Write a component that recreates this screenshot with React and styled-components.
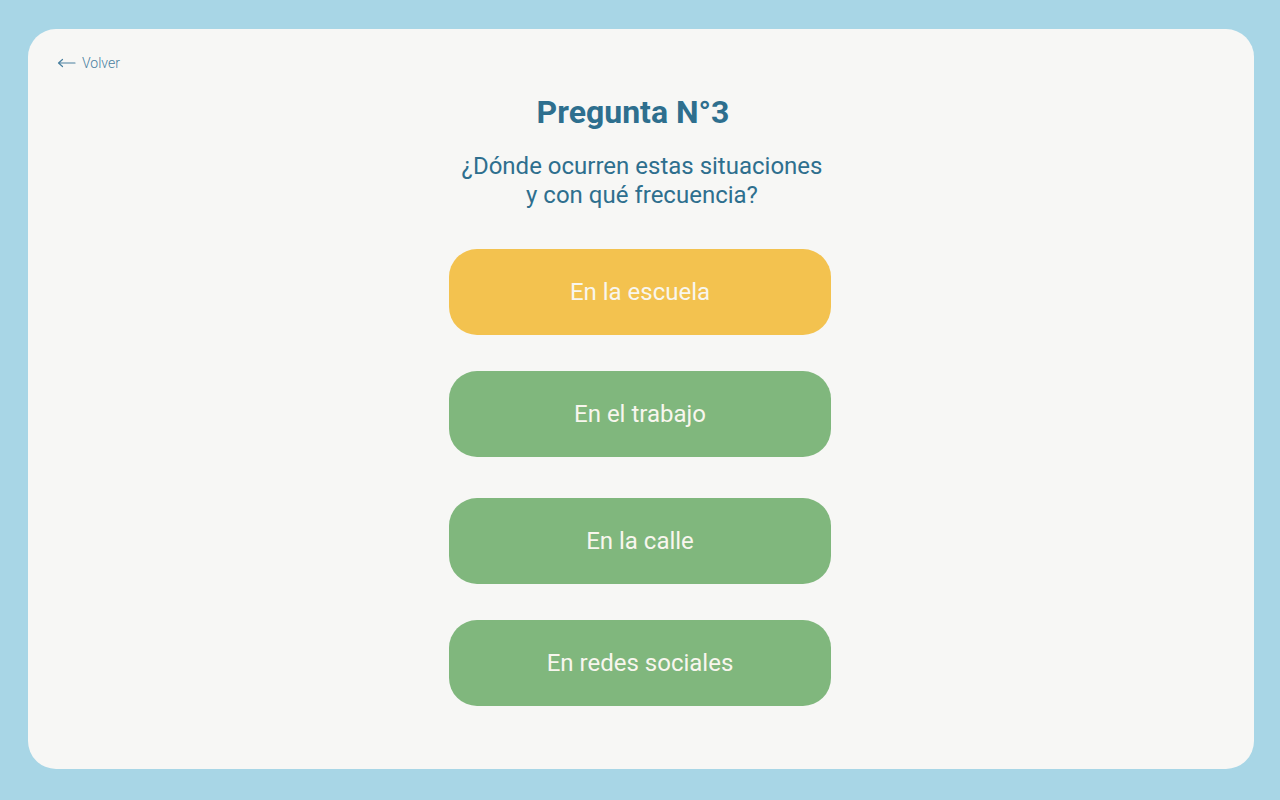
import React from "react";
import styled, { createGlobalStyle } from "styled-components";

const Global = createGlobalStyle`
  html, body { margin: 0; padding: 0; }
  body {
    background: #a8d6e6;
    font-family: Roboto, "Noto Sans", sans-serif;
  }
`;

const Page = styled.div`
  width: 1280px;
  height: 800px;
  box-sizing: border-box;
  padding: 29px 26px 31px 28px;
  display: flex;
`;

const Card = styled.main`
  flex: 1;
  background: #f7f7f5;
  border-radius: 28px;
  display: flex;
  flex-direction: column;
  align-items: center;
  position: relative;
`;

const Back = styled.a`
  align-self: flex-start;
  margin: 25px 0 0 29px;
  display: flex;
  align-items: center;
  gap: 6px;
  color: #4a80a0;
  font-size: 14px;
  font-weight: 300;
  line-height: 18px;
  text-decoration: none;
  cursor: pointer;
`;

const Title = styled.h1`
  margin: 21px 0 0 -16px;
  font-size: 32px;
  font-weight: 700;
  color: #2e6f8e;
  line-height: 38px;
`;

const Subtitle = styled.p`
  margin: 21px 0 0 2px;
  font-size: 24px;
  font-weight: 400;
  color: #2e6f8e;
  line-height: 29px;
  text-align: center;
`;

const Options = styled.div`
  margin: 39px 2px 0 0;
  display: flex;
  flex-direction: column;
  gap: 36px;
`;

const Option = styled.button`
  width: 382px;
  height: 86px;
  border: none;
  border-radius: 28px;
  background: ${(p) => (p.$active ? "#f3c24f" : "#80b77d")};
  color: #f8f6ee;
  font-family: Roboto, "Noto Sans", sans-serif;
  font-size: 24px;
  font-weight: 400;
  margin-top: ${(p) => p.$extra || 0}px;
  cursor: pointer;
`;

const options = [
  { label: "En la escuela", active: true },
  { label: "En el trabajo" },
  { label: "En la calle", extra: 5 },
  { label: "En redes sociales" },
];

export default function App() {
  return (
    <>
      <Global />
      <Page>
        <Card>
          <Back>
            <svg width="19" height="10" viewBox="0 0 19 10" fill="none">
              <path d="M18 5H1.5M5.5 1.5L1.5 5l4 3.5" stroke="#4a80a0" strokeWidth="1.2" strokeLinecap="round" strokeLinejoin="round" />
            </svg>
            Volver
          </Back>
          <Title>Pregunta N°3</Title>
          <Subtitle>
            ¿Dónde ocurren estas situaciones
            <br />
            y con qué frecuencia?
          </Subtitle>
          <Options>
            {options.map((o) => (
              <Option key={o.label} $active={o.active} $extra={o.extra}>
                {o.label}
              </Option>
            ))}
          </Options>
        </Card>
      </Page>
    </>
  );
}
